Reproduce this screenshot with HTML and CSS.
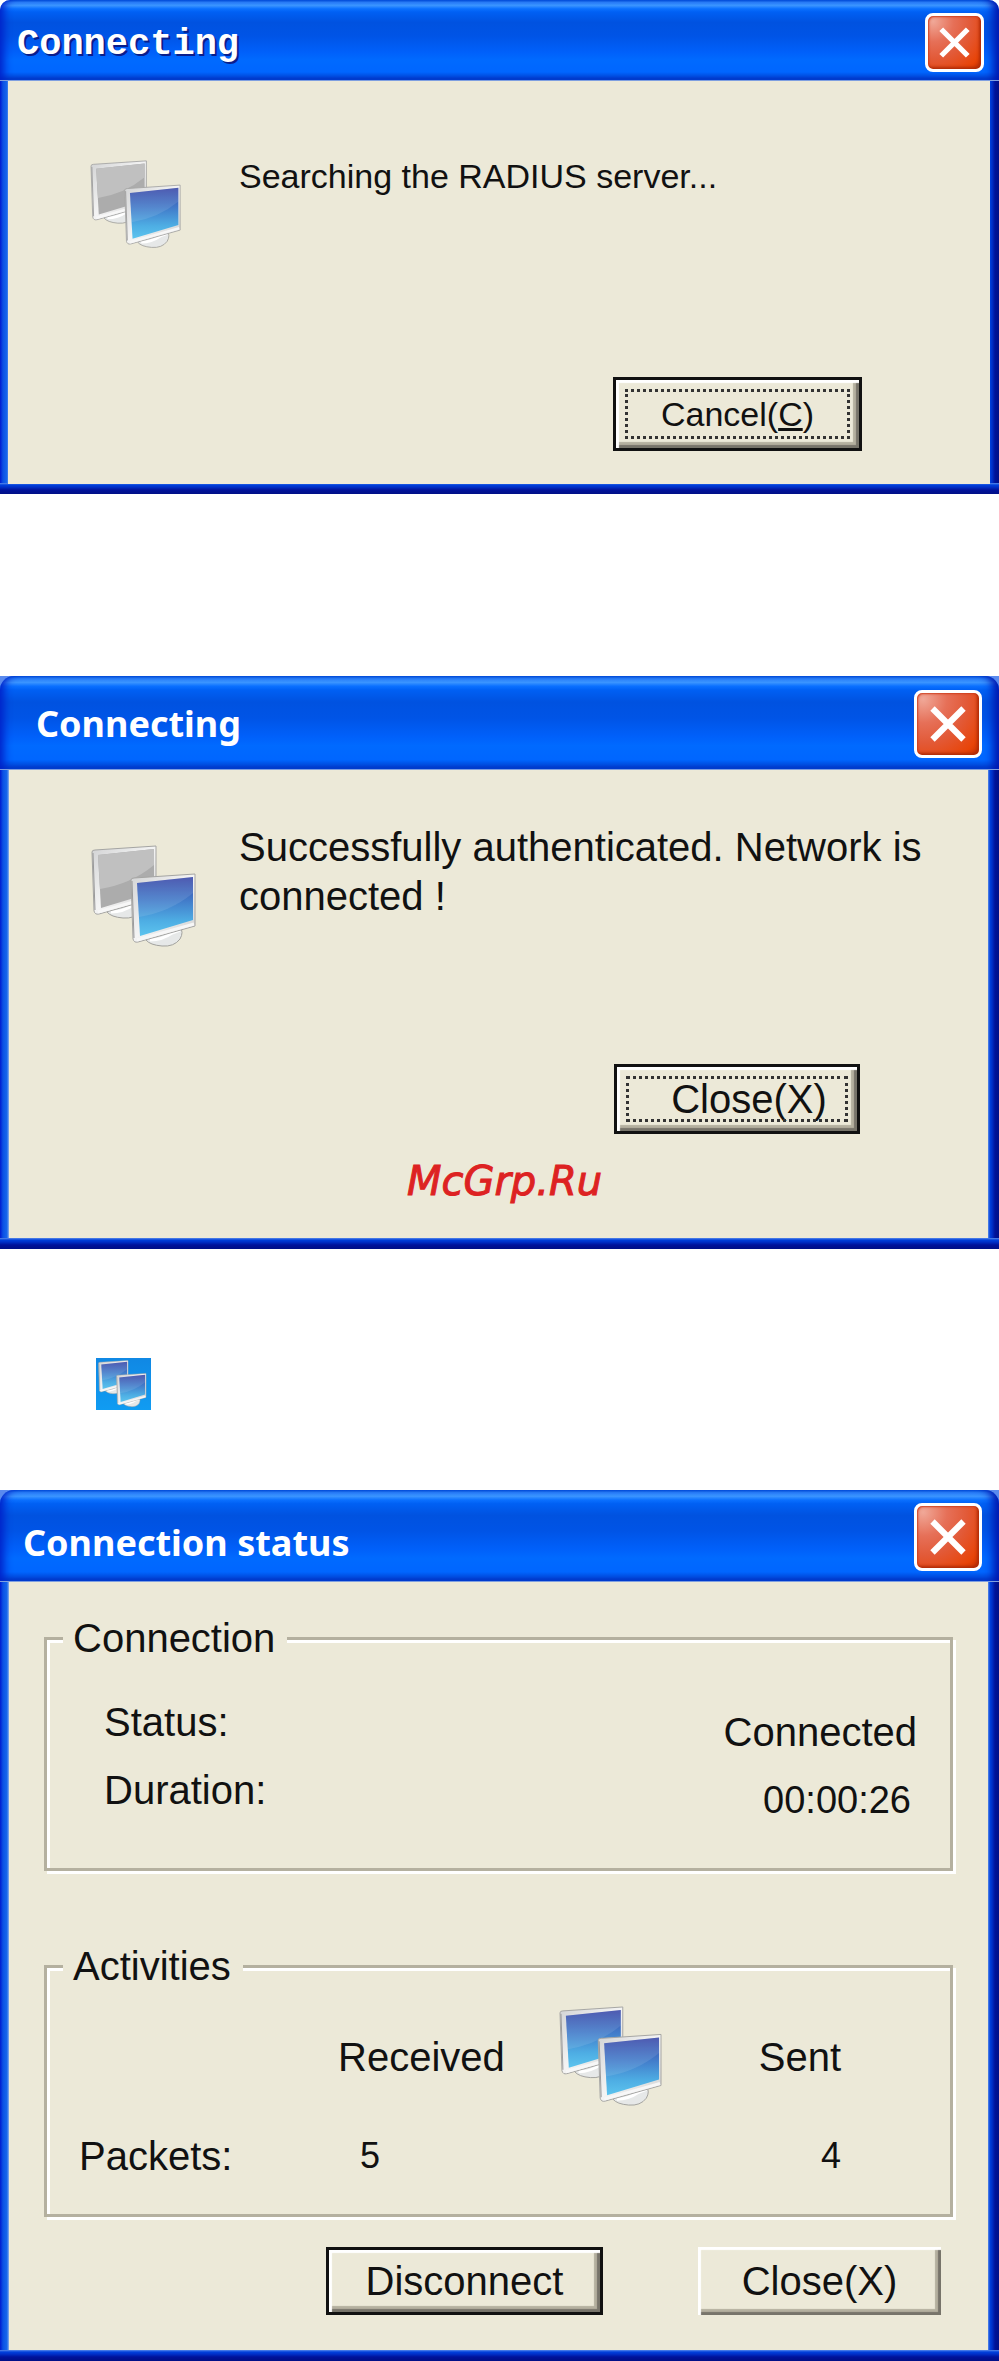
FILE: index.html
```
<!DOCTYPE html>
<html lang="en">
<head>
    <meta charset="UTF-8">
    <meta name="viewport" content="width=device-width, initial-scale=1.0">
    <title>Connecting</title>
    <link rel="stylesheet" href="styles.css">
</head>
<body>

    <!-- Searching dialog -->
    <section class="window window-small">
        <header class="title-bar">
            <h2 class="title title-mono">Connecting</h2>
            <button class="close-box" aria-label="Close">
                <svg viewBox="0 0 60 60"><path d="M15 15L45 45M45 15L15 45"/></svg>
            </button>
        </header>
        <div class="window-body">
            <div class="message">
                <svg class="monitors" viewBox="0 0 106 104">
                    <defs>
                        <linearGradient id="screenBlue" x1="0" y1="0" x2="0" y2="1">
                            <stop offset="0" stop-color="#3a48a8"/>
                            <stop offset="0.4" stop-color="#427cca"/>
                            <stop offset="0.75" stop-color="#4eaee4"/>
                            <stop offset="1" stop-color="#5cc4ee"/>
                        </linearGradient>
                        <linearGradient id="frame" x1="0" y1="0" x2="1" y2="1">
                            <stop offset="0" stop-color="#d2d3d4"/>
                            <stop offset="0.5" stop-color="#f4f4f4"/>
                            <stop offset="1" stop-color="#cfcfcf"/>
                        </linearGradient>
                        <g id="case">
                            <path d="M17 65Q28 63 40 57L50 54Q54 59 50 66Q44 74 32 73Q20 72 16 67Z" fill="#e6e8e8" stroke="#a2a29e"/>
                            <path d="M20 67Q32 67 42 60L50 57" fill="none" stroke="#ffffff" stroke-width="3"/>
                            <path d="M1 7Q1 5 4 5L65 1V53L8 69Q4 70 3 66Z" fill="url(#frame)" stroke="#a5a5a3"/>
                            <path d="M7 67L64 51" stroke="#f7f7f7" stroke-width="3"/>
                            <path d="M2 8L4 65" stroke="#9a9a9a" stroke-width="1"/>
                        </g>
                        <g id="monitorBlue">
                            <use href="#case"/>
                            <path d="M7 10L63 4V47L10 63Z" fill="url(#screenBlue)"/>
                            <path d="M7 10L63 4V20Q40 39 9 44Z" fill="#ffffff" opacity="0.1"/>
                        </g>
                        <g id="monitorGrey">
                            <use href="#case"/>
                            <path d="M7 10L63 4V47L10 63Z" fill="#acacac"/>
                            <path d="M7 10L63 4V20Q40 39 9 44Z" fill="#c0c0c0"/>
                        </g>
                    </defs>
                    <use href="#monitorGrey"/>
                    <use href="#monitorBlue" x="39" y="28"/>
                </svg>
                <p>Searching the RADIUS server...</p>
            </div>
            <div class="actions">
                <button class="btn btn-default btn-focus">Cancel(<u>C</u>)</button>
            </div>
        </div>
    </section>

    <!-- Success dialog -->
    <section class="window window-success">
        <header class="title-bar">
            <h2 class="title title-wide">Connecting</h2>
            <button class="close-box" aria-label="Close">
                <svg viewBox="0 0 60 60"><path d="M15 15L45 45M45 15L15 45"/></svg>
            </button>
        </header>
        <div class="window-body">
            <div class="message">
                <svg class="monitors" viewBox="0 0 106 104">
                    <use href="#monitorGrey"/>
                    <use href="#monitorBlue" x="39" y="28"/>
                </svg>
                <p>Successfully authenticated. Network is connected !</p>
            </div>
            <div class="actions">
                <button class="btn btn-default btn-focus btn-shift">Close(X)</button>
            </div>
            <p class="site-name">McGrp.Ru</p>
        </div>
    </section>

    <!-- Tray icon -->
    <div class="tray-icon">
        <svg viewBox="0 0 106 104">
            <use href="#monitorBlue"/>
            <use href="#monitorBlue" x="39" y="28"/>
        </svg>
    </div>

    <!-- Connection status dialog -->
    <section class="window window-status">
        <header class="title-bar">
            <h2 class="title">Connection status</h2>
            <button class="close-box" aria-label="Close">
                <svg viewBox="0 0 60 60"><path d="M15 15L45 45M45 15L15 45"/></svg>
            </button>
        </header>
        <div class="window-body">
            <fieldset class="group">
                <legend>Connection</legend>
                <dl class="details">
                    <dt>Status:</dt>
                    <dd>Connected</dd>
                    <dt>Duration:</dt>
                    <dd class="clock">00:00:26</dd>
                </dl>
            </fieldset>
            <fieldset class="group">
                <legend>Activities</legend>
                <table class="activity">
                    <tr>
                        <td class="col-label"></td>
                        <th class="col-received" scope="col">Received</th>
                        <td class="col-icon">
                            <svg class="monitors" viewBox="0 0 106 104">
                                <use href="#monitorBlue"/>
                                <use href="#monitorBlue" x="39" y="28"/>
                            </svg>
                        </td>
                        <th class="col-sent" scope="col">Sent</th>
                    </tr>
                    <tr class="packets">
                        <th scope="row">Packets:</th>
                        <td class="count-received">5</td>
                        <td></td>
                        <td class="count-sent">4</td>
                    </tr>
                </table>
            </fieldset>
            <div class="actions">
                <button class="btn btn-default btn-wide">Disconnect</button>
                <button class="btn">Close(X)</button>
            </div>
        </div>
    </section>

</body>
</html>
```
FILE: styles.css
```
/* Page */
* {
    box-sizing: border-box;
}
body {
    margin: 0;
    background: #ffffff;
    color: #111111;
    font-family: "Liberation Sans", Arial, sans-serif;
    font-size: 40px;
    line-height: 46px;
}
h2, p, dl, dd {
    margin: 0;
}

/* Window frame: left, right and bottom edges are drawn as gradients */
.window {
    background:
        linear-gradient(to bottom, #5a8ae8 0, #0040dc 2px, #0030c8 4px, #00129a 7px, #000f86 100%) bottom / 100% 11px no-repeat,
        linear-gradient(to right, #0019cf 0, #0a50e4 3px, #1666ec 7px, #8fb0ea 9px) 0 20px / 9px 100% no-repeat,
        linear-gradient(to right, #5a8ae8 0, #0040dc 2px, #0030c8 4px, #00129a 7px, #000f86 100%) right 20px / 11px 100% no-repeat;
    background-position: left bottom, left 0 top 20px, right 0 top 20px;
    padding-bottom: 11px;
}
.window-body {
    margin: 0 11px 0 9px;
    background: #ece9d8;
}

/* Title bar */
.title-bar {
    display: flex;
    align-items: center;
    justify-content: space-between;
    height: 94px;
    padding: 2px 17px 0 23px;
    border-bottom: 1px solid #7f9fe0;
    border-radius: 14px 14px 0 0;
    background: linear-gradient(to bottom, #0050dc 0, #2a80f8 3%, #3a94ff 7%, #0a70ff 11%, #0060f4 15%, #0052e0 28%, #0054e6 45%, #0060fa 65%, #006aff 75%, #0066ff 90%, #0040d0 98%);
    box-shadow: inset 10px 0 8px -6px #0020c8, inset -12px 0 8px -6px #0018b0;
}
.title {
    color: #ffffff;
    font-family: "Noto Sans", "Open Sans", sans-serif;
    font-size: 36px;
    font-weight: bold;
    line-height: 48px;
}
.title-wide {
    padding-left: 13px;
}
.title-mono {
    padding-top: 4px;
    font-family: "Liberation Mono", monospace;
    font-size: 37px;
    text-shadow: 2px 2px 0 #0a1e8c;
}

/* Red close box */
.close-box {
    width: 68px;
    height: 68px;
    padding: 0;
    border: 3px solid #ffffff;
    border-radius: 8px;
    background: radial-gradient(circle at 10% 10%, #f0a898 0, #e67058 30%, #e25a38 55%, #e84408 85%, #c83000 100%);
    box-shadow: inset -2px -2px 3px #b02c08, inset 1px 1px 2px #d04020;
}
.close-box svg {
    display: block;
    width: 100%;
    height: 100%;
}
.close-box path {
    fill: none;
    stroke: #ffffff;
    stroke-width: 6;
}

/* Message dialogs */
.message {
    display: flex;
    align-items: flex-start;
    gap: 42px;
    padding: 53px 44px 0 82px;
}
.message p {
    line-height: 49px;
}
.monitors {
    display: block;
    flex: none;
    width: 106px;
    height: 104px;
}
.message .monitors {
    margin-top: 22px;
}
.actions {
    display: flex;
    justify-content: flex-end;
    padding-right: 128px;
}

/* Buttons */
.btn {
    width: 243px;
    height: 68px;
    padding: 0;
    border: 0;
    background: #ece9d8;
    box-shadow: inset 3px 3px 1px #ffffff, inset -3px -3px 1px #77746a, inset -6px -6px 1px #b4b09f;
    color: #111111;
    font-family: inherit;
    font-size: inherit;
    line-height: 46px;
}
.btn-default {
    width: 246px;
    height: 70px;
    border: 3px solid #111111;
}
.btn-focus {
    outline: 3px dotted #333333;
    outline-offset: -15px;
}
.btn-shift {
    padding-left: 24px;
}
.btn-wide {
    width: 277px;
}
.btn u {
    text-decoration-thickness: 3px;
}

/* First dialog */
.window-small {
    margin-bottom: 182px;
    padding-bottom: 10px;
    font-size: 34px;
}
.window-small .title-bar {
    height: 81px;
    padding: 4px 15px 0 17px;
    border-radius: 10px 10px 0 0;
}
.window-small .close-box {
    width: 59px;
    height: 59px;
}
.window-small .window-body {
    margin: 0 9px 0 8px;
    padding-bottom: 33px;
}
.window-small .message {
    gap: 57px;
    padding-top: 75px;
}
.window-small .message p {
    line-height: 40px;
}
.window-small .monitors {
    width: 92px;
    height: 90px;
    margin-top: 4px;
}
.window-small .actions {
    padding-top: 127px;
}
.window-small .btn {
    width: 249px;
    height: 74px;
}

/* Second dialog */
.window-success {
    margin-bottom: 109px;
    background-color: #5a8aee;
}
.window-success .window-body {
    padding-bottom: 34px;
}
.window-success .actions {
    padding-top: 115px;
}
.site-name {
    padding: 24px 0 0 12px;
    color: #dd2222;
    font-family: "DejaVu Sans", sans-serif;
    font-style: italic;
    text-align: center;
    -webkit-text-stroke: 1px #dd2222;
}

/* Tray icon */
.tray-icon {
    width: 55px;
    height: 52px;
    margin: 0 0 80px 96px;
    padding: 2px;
    background: linear-gradient(#1088e4, #109cf2);
}
.tray-icon svg {
    display: block;
    width: 49px;
    height: 48px;
}

/* Status dialog */
.window-status {
    background-color: #5a8aee;
}
.window-status .title-bar {
    height: 92px;
}
.window-status .title {
    padding-top: 12px;
}
.window-status .window-body {
    padding: 33px 0 35px;
}
.group {
    margin: 0 35px 72px;
    padding: 0 16px;
    border: 3px solid #b4b09f;
    box-shadow: 3px 3px 0 #ffffff, inset 3px 3px 0 #ffffff;
}
.group legend {
    padding: 0 12px 0 10px;
    background: #ece9d8;
}
.details {
    display: grid;
    grid-template-columns: 1fr auto;
    grid-auto-rows: 68px;
    padding: 38px 17px 33px 41px;
}
.details dd {
    padding-top: 10px;
    text-align: right;
}
.details .clock {
    padding-right: 6px;
    font-size: 38px;
}
.activity {
    width: 100%;
    margin: 17px 0 35px;
    padding: 0 93px 0 16px;
    border-spacing: 0;
    table-layout: fixed;
}
.activity th,
.activity td {
    padding: 0;
    font-weight: normal;
    text-align: left;
}
.col-label {
    width: 34%;
}
.col-received {
    width: 29%;
}
.col-icon {
    width: 14%;
}
.activity .monitors {
    width: 104px;
    height: 102px;
}
.activity .packets th,
.activity .packets td {
    padding-top: 25px;
}
.activity .packets .count-received {
    padding-left: 22px;
    font-size: 36px;
}
.activity .packets .count-sent {
    font-size: 36px;
}
.activity .col-sent,
.activity .packets .count-sent {
    text-align: right;
}
.window-status .group + .group {
    margin-bottom: 30px;
}
.window-status .actions {
    gap: 95px;
    padding-right: 47px;
}
.window-status .btn {
    height: 68px;
}
```
